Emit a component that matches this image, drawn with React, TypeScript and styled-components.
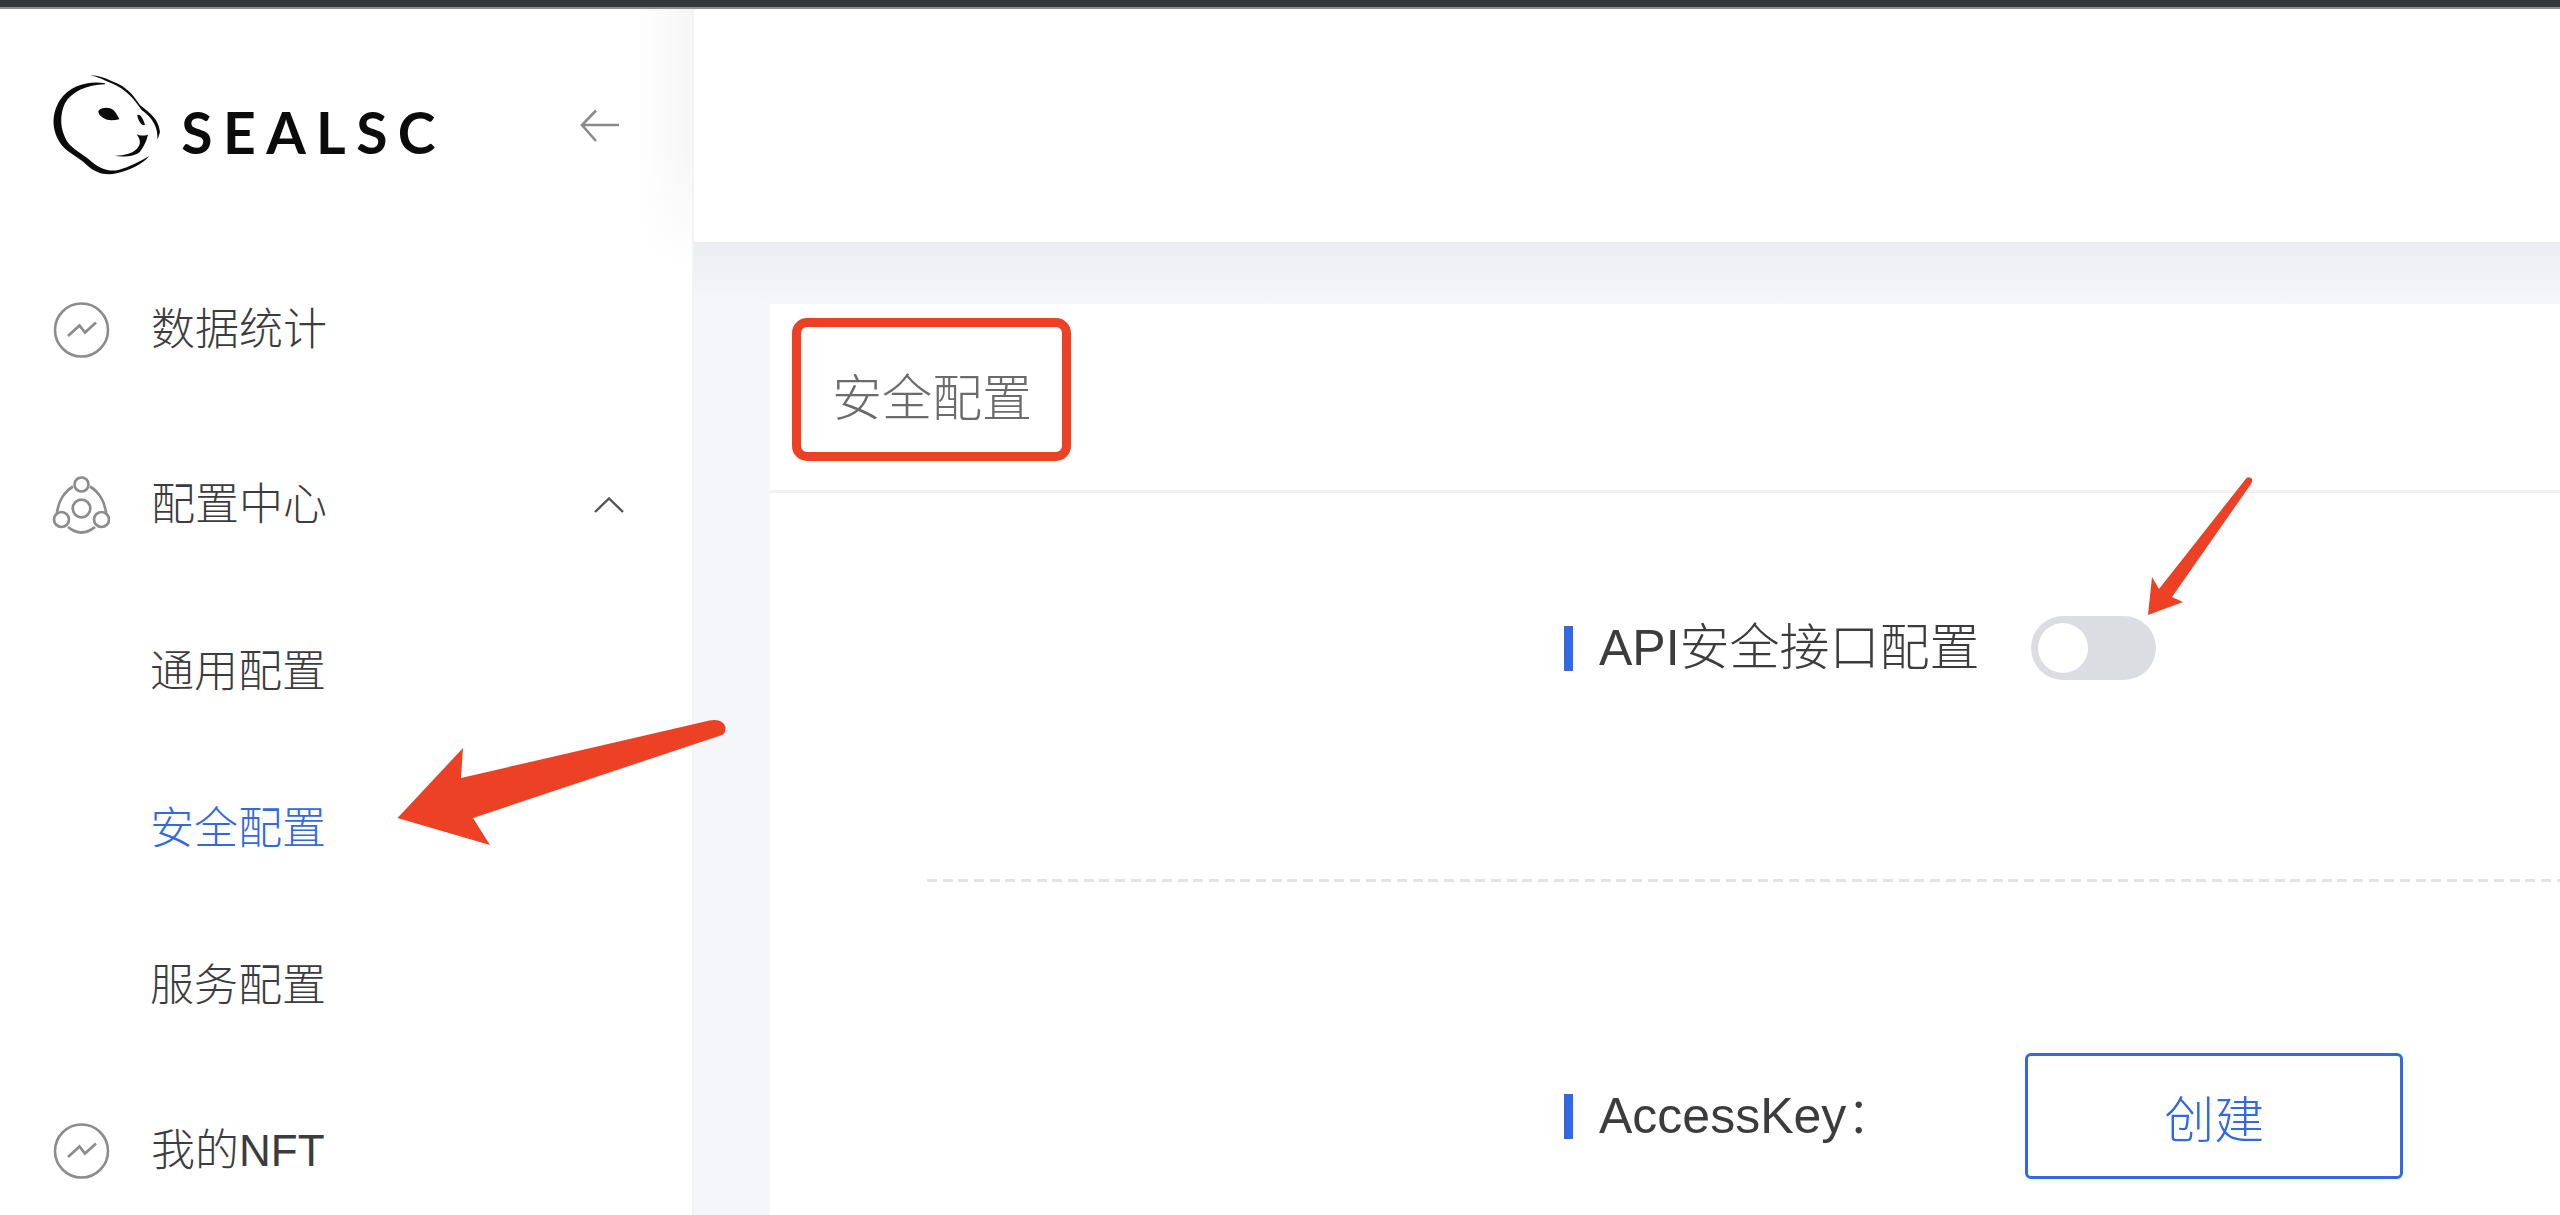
import React from 'react';
import styled, { createGlobalStyle } from 'styled-components';

const Global = createGlobalStyle`
  * { box-sizing: border-box; }
  html, body { margin: 0; padding: 0; height: 1215px; overflow: hidden; background: #fff; }
  body { font-family: "Liberation Sans", "Noto Sans CJK SC", sans-serif; color: #3c3c3e; }
`;

const Page = styled.div`
  position: relative;
  width: 2560px;
  height: 1215px;
  overflow: hidden;
  display: flex;
  flex-direction: column;
`;
const WindowEdge = styled.div`
  height: 9px;
  flex: none;
  background: #36373c;
  border-bottom: 2px solid #8f9093;
`;
const Body = styled.div`
  flex: 1;
  display: flex;
  min-height: 0;
`;
const Sidebar = styled.aside`
  position: relative;
  width: 694px;
  flex: none;
  background: #fff;
  border-right: 2px solid #f3f3f5;
  &::after {
    content: '';
    position: absolute;
    top: 0;
    right: 0;
    width: 58px;
    height: 262px;
    background: linear-gradient(to right, rgba(246, 246, 247, 0), #f6f6f7);
    -webkit-mask-image: linear-gradient(to bottom, #000 55%, transparent);
    mask-image: linear-gradient(to bottom, #000 55%, transparent);
  }
`;
const LogoRow = styled.div`
  height: 242px;
  display: flex;
  align-items: flex-start;
  padding: 41px 72px 0 30px;
`;
const Logo = styled.svg`
  width: 133.3px;
  height: 140px;
  flex: none;
`;
const Wordmark = styled.span`
  margin: 59px 0 0 18px;
  font-family: "Lato", sans-serif;
  font-weight: 700;
  font-size: 57px;
  line-height: 46px;
  letter-spacing: 10.4px;
  color: #0b0b0b;
`;
const BackButton = styled.svg`
  width: 40px;
  height: 34px;
  margin: 59px 0 0 auto;
  flex: none;
`;
const Menu = styled.nav`
  display: flex;
  flex-direction: column;
`;
const MenuRow = styled.div<{ $after?: number }>`
  height: 157px;
  flex: none;
  display: flex;
  align-items: center;
  padding-right: 68px;
  margin-bottom: ${p => p.$after ?? 0}px;
  font-size: 44px;
  font-weight: 300;
  color: #3c3c3e;
`;
const MenuLabel = styled.span`
  padding-bottom: 7px;
`;
const MenuIcon = styled.svg`
  width: 58px;
  height: 58px;
  flex: none;
  margin: 0 41px 0 52px;
`;
const Chevron = styled.svg`
  width: 30px;
  height: 16px;
  margin-left: auto;
  flex: none;
`;
const SubRow = styled.a<{ $active?: boolean }>`
  height: 157px;
  flex: none;
  display: flex;
  align-items: center;
  padding: 0 0 5px 150px;
  font-size: 44px;
  font-weight: 300;
  color: ${p => (p.$active ? '#3268e0' : '#3c3c3e')};
`;
const SubList = styled.div`
  display: flex;
  flex-direction: column;
  margin-top: 9px;
  padding-bottom: 9px;
`;
const Main = styled.main`
  flex: 1;
  min-width: 0;
  display: flex;
  flex-direction: column;
`;
const TopHeader = styled.header`
  height: 233px;
  flex: none;
  background: #fff;
`;
const Content = styled.section`
  flex: 1;
  min-height: 0;
  display: flex;
  padding: 62px 0 0 76px;
  background: linear-gradient(to bottom, #ecedf0, #f5f6fa 62px);
`;
const Card = styled.div`
  flex: 1;
  min-width: 0;
  background: #fff;
`;
const CardHeader = styled.div`
  height: 189px;
  display: flex;
  align-items: center;
  padding: 0 0 6px 62px;
  border-bottom: 3px solid #f1f1f3;
  font-size: 50px;
  font-weight: 300;
  color: #6b6b6b;
`;
const CardBody = styled.div`
  padding-top: 123px;
`;
const Row = styled.div<{ $gap: number }>`
  display: flex;
  align-items: center;
  gap: ${p => p.$gap}px;
  margin-left: 794px;
`;
const Label = styled.span`
  display: flex;
  align-items: center;
  font-size: 50px;
  font-weight: 300;
  line-height: 56px;
  color: #3c3c3e;
  &::before {
    content: '';
    width: 9px;
    height: 45px;
    margin-right: 26px;
    background: #3268e0;
  }
`;
const Toggle = styled.button`
  width: 125px;
  height: 64px;
  padding: 0 0 0 7px;
  display: flex;
  align-items: center;
  border: 0;
  border-radius: 32px;
  background: #dcdde3;
`;
const Knob = styled.span`
  width: 50px;
  height: 50px;
  border-radius: 50%;
  background: #fff;
`;
const DashedRule = styled.div`
  height: 3px;
  margin: 199px 0 171px 157px;
  background: repeating-linear-gradient(to right, #e3e4ea 0 10px, transparent 10px 15.67px);
`;
const OutlineButton = styled.button`
  width: 378px;
  height: 126px;
  border: 3px solid #3268e0;
  border-radius: 6px;
  background: #fff;
  color: #3268e0;
  font-family: inherit;
  font-size: 50px;
  font-weight: 300;
`;
const HighlightBox = styled.div`
  position: absolute;
  left: 792px;
  top: 318px;
  width: 279px;
  height: 143px;
  border: 9px solid #ec4125;
  border-radius: 15px;
`;
const Arrow = styled.svg<{ $x: number; $y: number }>`
  position: absolute;
  left: ${p => p.$x}px;
  top: ${p => p.$y}px;
`;

const TrendIcon = () => (
  <MenuIcon viewBox="0 0 58 58" fill="none" stroke="#8c8c8c">
    <circle cx="29.5" cy="29" r="26.5" strokeWidth="2.6" />
    <path d="M16 35 L27.5 24.5 L33 31.5 L44 21.5" strokeWidth="2.8" />
  </MenuIcon>
);

const HubIcon = () => (
  <MenuIcon viewBox="0 0 58 58" fill="none" stroke="#8c8c8c" strokeWidth="2.7">
    <circle cx="29.5" cy="8.5" r="7" />
    <circle cx="9.5" cy="43.5" r="7.5" />
    <circle cx="49.5" cy="43.5" r="7.5" />
    <circle cx="29.5" cy="32.5" r="8.8" />
    <path d="M21 10.5 C12 16 6 26 5 37" />
    <path d="M38 10.5 C47 16 53 26 54 37" />
    <path d="M16 51 Q29.5 62 43 51" />
  </MenuIcon>
);

export default function App() {
  return (
    <Page>
      <Global />
      <WindowEdge />
      <Body>
        <Sidebar>
          <LogoRow>
            <Logo viewBox="0 0 400 420" fill="#0b0b0b">
              <path d="M225 100 C180 92 120 105 90 150 C65 190 62 240 95 285 C115 310 145 320 170 345 C195 368 225 378 260 370 C300 360 335 345 358 318 C330 335 300 350 265 360 C235 366 210 355 185 335 C160 312 130 300 112 275 C90 240 88 195 105 160 C125 125 170 105 225 103 Z" />
              <path d="M180 75 C215 78 225 85 250 95 C290 110 310 135 330 165 C360 190 385 205 390 245 C388 255 385 262 382 268 C385 235 370 205 335 180 C310 145 290 120 245 100 C225 92 210 82 180 75 Z" />
              <path d="M205 183 C215 170 245 170 255 185 C262 195 268 205 268 208 C250 212 230 212 222 205 C215 200 205 195 205 183 Z" />
              <path d="M322 195 C330 190 340 205 345 225 C335 228 325 215 322 195 Z" />
              <path d="M320 252 C330 258 340 258 354 254 C350 270 345 285 330 305 C315 318 285 322 255 318 C285 316 310 310 322 295 C335 280 330 268 320 252 Z" />
            </Logo>
            <Wordmark>SEALSC</Wordmark>
            <BackButton viewBox="0 0 40 34" fill="none" stroke="#8a8a8a" strokeWidth="2.6">
              <path d="M39 16 H2 M16 1.5 L2 16 L16 32" />
            </BackButton>
          </LogoRow>
          <Menu>
            <MenuRow $after={18}>
              <TrendIcon />
              <MenuLabel>数据统计</MenuLabel>
            </MenuRow>
            <MenuRow>
              <HubIcon />
              <MenuLabel>配置中心</MenuLabel>
              <Chevron viewBox="0 0 30 16" fill="none" stroke="#55565a" strokeWidth="2.4">
                <path d="M1 15 L15 1.5 L29 15" />
              </Chevron>
            </MenuRow>
            <SubList>
              <SubRow>通用配置</SubRow>
              <SubRow $active>安全配置</SubRow>
              <SubRow>服务配置</SubRow>
            </SubList>
            <MenuRow>
              <TrendIcon />
              <MenuLabel>我的NFT</MenuLabel>
            </MenuRow>
          </Menu>
        </Sidebar>
        <Main>
          <TopHeader />
          <Content>
            <Card>
              <CardHeader>安全配置</CardHeader>
              <CardBody>
                <Row $gap={51}>
                  <Label>API安全接口配置</Label>
                  <Toggle aria-label="API安全接口配置">
                    <Knob />
                  </Toggle>
                </Row>
                <DashedRule />
                <Row $gap={129}>
                  <Label>AccessKey：</Label>
                  <OutlineButton>创建</OutlineButton>
                </Row>
              </CardBody>
            </Card>
          </Content>
        </Main>
      </Body>
      <HighlightBox />
      <Arrow $x={390} $y={710} width="340" height="140" viewBox="390 710 340 140" fill="#ec4125">
        <path d="M397.5 818 L463 748 L461 778 L703 722 Q722 716 725.5 727 Q726 733 722 735 L473 818 L490 845 Z" />
      </Arrow>
      <Arrow $x={2145} $y={475} width="110" height="145" viewBox="2145 475 110 145" fill="#ec4125">
        <path d="M2148 615 L2152 577 L2159 589 L2246.5 478 Q2250 476 2252 479 Q2252.5 482 2251 484 L2172 597 L2183 602 Z" />
      </Arrow>
    </Page>
  );
}
